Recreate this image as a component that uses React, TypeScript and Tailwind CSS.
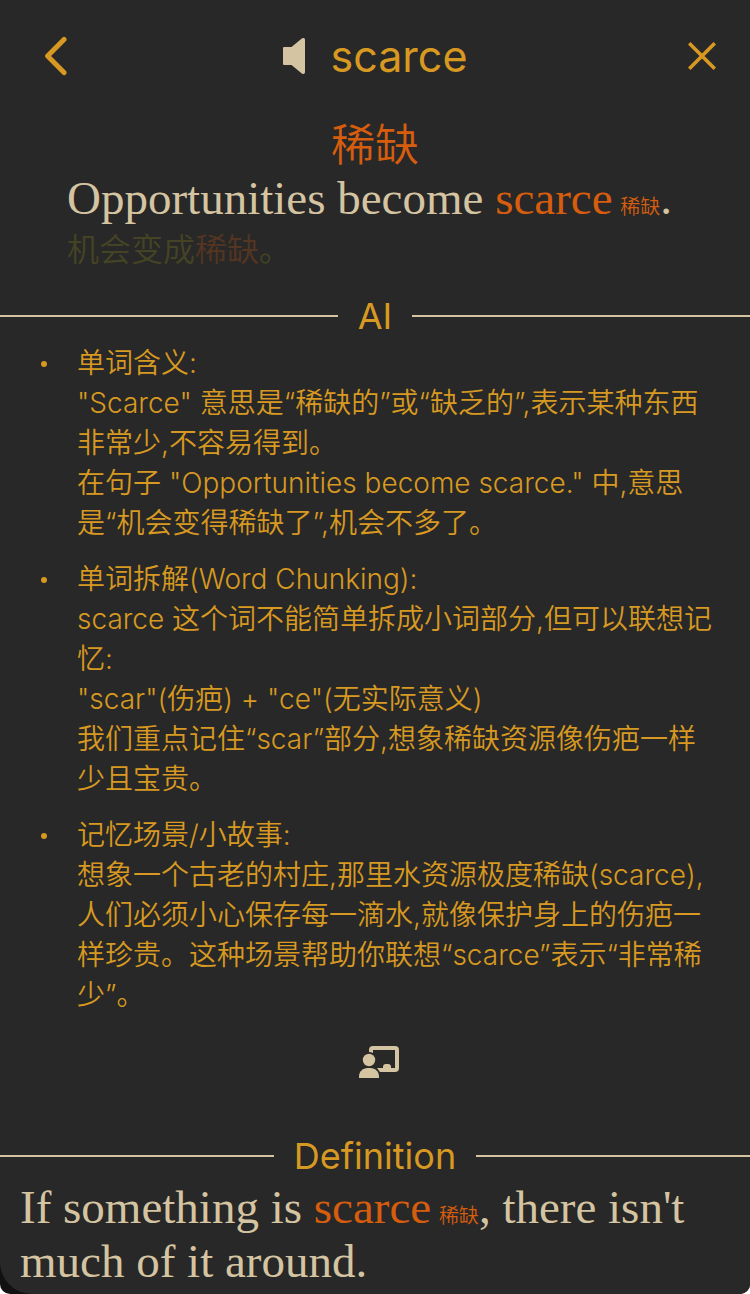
import type { ReactNode } from "react";

const sections: { title: string; lines: string[] }[] = [
  {
    title: "单词含义:",
    lines: [
      '"Scarce" 意思是“稀缺的”或“缺乏的”,表示某种东西',
      "非常少,不容易得到。",
      '在句子 "Opportunities become scarce." 中,意思',
      "是“机会变得稀缺了”,机会不多了。",
    ],
  },
  {
    title: "单词拆解(Word Chunking):",
    lines: [
      "scarce 这个词不能简单拆成小词部分,但可以联想记",
      "忆:",
      '"scar"(伤疤) + "ce"(无实际意义)',
      "我们重点记住“scar”部分,想象稀缺资源像伤疤一样",
      "少且宝贵。",
    ],
  },
  {
    title: "记忆场景/小故事:",
    lines: [
      "想象一个古老的村庄,那里水资源极度稀缺(scarce),",
      "人们必须小心保存每一滴水,就像保护身上的伤疤一",
      "样珍贵。这种场景帮助你联想“scarce”表示“非常稀",
      "少”。",
    ],
  },
];

function Divider({ children }: { children: ReactNode }) {
  return (
    <div className="flex items-center gap-5">
      <span className="h-[2px] flex-1 bg-[#d5c4a1]" />
      <h2 className="text-[36px] leading-[48px]">{children}</h2>
      <span className="h-[2px] flex-1 bg-[#d5c4a1]" />
    </div>
  );
}

function Keyword() {
  return (
    <span className="text-[#d65d0e]">
      scarce{" "}
      <span className="-ml-1 font-['Noto_Sans_CJK_SC',sans-serif] text-[20px] leading-none font-[350]">稀缺</span>
    </span>
  );
}

export default function App() {
  return (
    <div className="overflow-hidden rounded-b-[10px] bg-[#111111]">
      <main
        lang="zh-CN"
        className="rounded-bl-[32px] bg-[#282828] pb-[6px] font-[Inter,'Noto_Sans_CJK_SC',sans-serif] text-[#d79921]"
      >
        <header className="grid h-28 grid-cols-[1fr_auto_1fr] items-center pr-5 pl-7">
          <button type="button" aria-label="Back" className="flex w-14 justify-center justify-self-start">
            <svg width="24" height="40" viewBox="0 0 24 40" fill="none" stroke="currentColor" strokeWidth="5" strokeLinecap="round" strokeLinejoin="round">
              <path d="M20 3.400 3.600 20 20 36.600" />
            </svg>
          </button>
          <div className="-ml-2 flex items-center gap-[26px]">
            <button type="button" aria-label="Play pronunciation">
              <svg width="22" height="36" viewBox="0 0 22 36" fill="#d5c4a1">
                <path d="M1 9h7.500L18.800.6C20.300-.5 22 0 22 2v32c0 2-1.700 2.500-3.200 1.400L8.500 27H1a1 1 0 0 1-1-1V10a1 1 0 0 1 1-1Z" />
              </svg>
            </button>
            <h1 className="text-[43px] leading-[56px]">scarce</h1>
          </div>
          <button type="button" aria-label="Close" className="flex w-14 justify-center justify-self-end">
            <svg width="28" height="28" viewBox="0 0 28 28" fill="none" stroke="currentColor" strokeWidth="3.600" strokeLinecap="square">
              <path d="M2.500 2.500l23 23M25.500 2.500l-23 23" />
            </svg>
          </button>
        </header>

        <section>
          <p className="pt-[7px] text-center text-[44px] leading-[52px] font-[350] text-[#d65d0e]">稀缺</p>
          <div className="px-[67px]">
            <p className="font-['Liberation_Serif',serif] text-[47px] leading-[54px] text-[#d5c4a1]">
              Opportunities become <Keyword />.
            </p>
            <p className="text-[32px] leading-[50px] font-[350] text-[#98971a] opacity-25">
              机会变成<span className="text-[#d65d0e]">稀缺</span>。
            </p>
          </div>
        </section>

        <section className="pt-[17px]">
          <Divider>AI</Divider>
          <ul className="flex flex-col gap-4 pt-[3px] pr-5 pl-[41px] text-[28px] leading-[40px] font-[350]">
            {sections.map((section) => (
              <li key={section.title} className="flex gap-[30px]">
                <span className="mt-[18px] size-[6px] shrink-0 rounded-full bg-[#d79921]" />
                <div className="whitespace-nowrap">
                  <h3>{section.title}</h3>
                  {section.lines.map((line) => (
                    <p key={line}>{line}</p>
                  ))}
                </div>
              </li>
            ))}
          </ul>
          <div className="flex justify-center pt-[31px] pb-[54px] pl-2">
            <button type="button" aria-label="Explain">
              <svg width="40" height="32" viewBox="0 0 40 32" fill="#d5c4a1">
                <circle cx="10" cy="14" r="6.200" />
                <path d="M0 32v-1.500C0 25.500 4 22 8.500 22h3c4.500 0 8.500 3.500 8.500 8.500V32Z" />
                <path d="M10 6V4a4 4 0 0 1 4-4h22a4 4 0 0 1 4 4v18a4 4 0 0 1-4 4H21l-3-4h6v-1a3 3 0 0 1 3-3h2a3 3 0 0 1 3 3v1h4V4H14v3Q12 6 10 6Z" />
              </svg>
            </button>
          </div>
        </section>

        <section>
          <Divider>Definition</Divider>
          <p className="px-5 font-['Liberation_Serif',serif] text-[47px] leading-[54px] text-[#d5c4a1]">
            If something is <Keyword />, there isn't much of it around.
          </p>
        </section>
      </main>
    </div>
  );
}
